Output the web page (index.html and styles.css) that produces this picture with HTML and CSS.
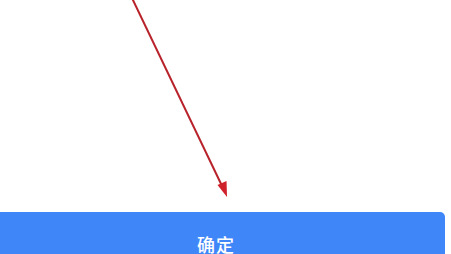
FILE: index.html
```html
<!DOCTYPE html>
<html lang="zh">
<head>
<meta charset="utf-8">
<link rel="stylesheet" href="styles.css">
</head>
<body>
<div class="page">
  <div class="canvas">
    <svg class="arrow" width="451" height="212" viewBox="0 0 451 212">
      <defs>
        <filter id="soft" x="-20%" y="-20%" width="140%" height="140%">
          <feGaussianBlur stdDeviation="0.5"/>
        </filter>
      </defs>
      <g filter="url(#soft)">
        <line x1="132" y1="-2" x2="223" y2="188" stroke="#b8232a" stroke-width="2"/>
        <polygon points="227,197 217.5,185 226.5,181" fill="#cf2229"/>
      </g>
    </svg>
  </div>
  <div class="confirm">
    <span class="label">确定</span>
  </div>
</div>
</body>
</html>
```
FILE: styles.css
```css
html, body {
  margin: 0;
  padding: 0;
  background: #ffffff;
  overflow: hidden;
}
.page {
  width: 451px;
  height: 254px;
  display: flex;
  flex-direction: column;
  overflow: hidden;
}
.canvas {
  height: 212px;
  flex: none;
}
.arrow {
  display: block;
}
.confirm {
  flex: none;
  width: 445px;
  height: 50px;
  background: #3f87f8;
  border-radius: 0 5px 5px 0;
  display: flex;
  justify-content: center;
  padding-right: 13px;
  box-sizing: border-box;
  padding-top: 21px;
}
.label {
  color: #ffffff;
  font-family: "Noto Sans CJK SC", "Noto Sans", sans-serif;
  font-size: 18px;
  font-weight: 500;
  line-height: 22px;
  letter-spacing: 1px;
}
```
